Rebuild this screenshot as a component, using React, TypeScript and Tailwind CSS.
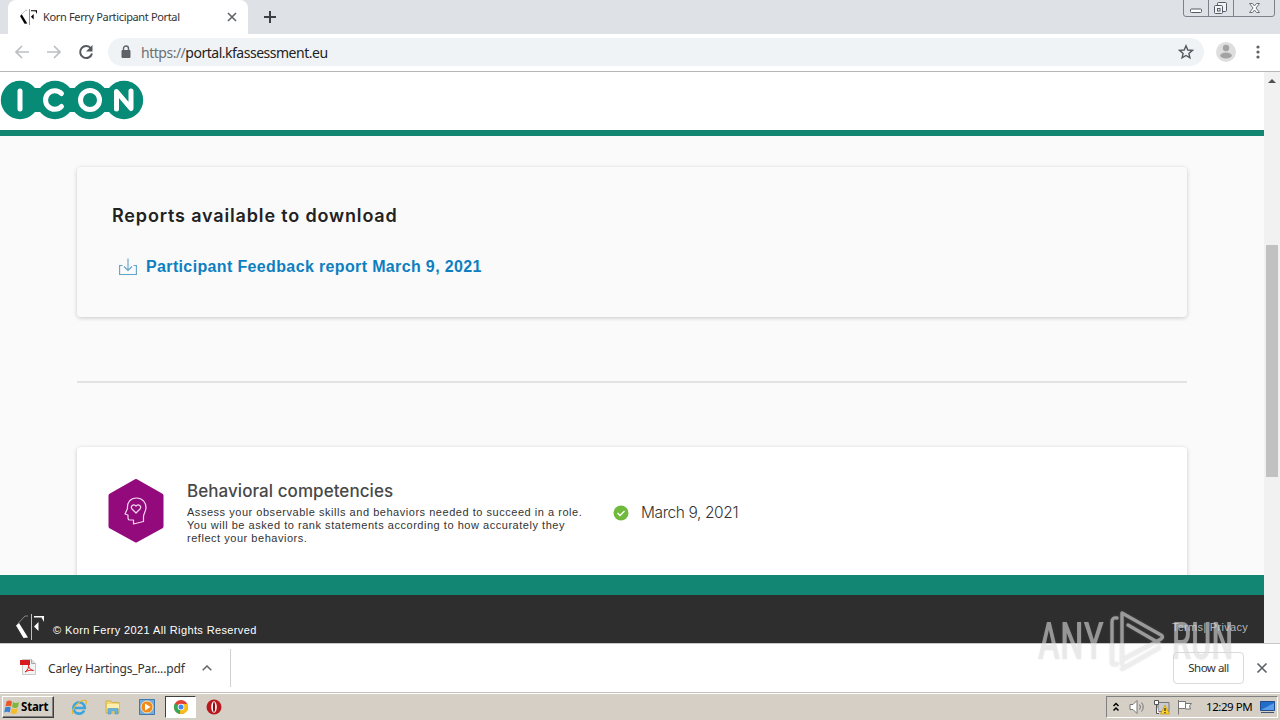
import type { ReactNode } from 'react';

const KfLogo = ({ className }: { className: string }) => (
  <svg viewBox="0 0 28 26" className={className} fill="currentColor">
    <path d="M0 11.500 3 9l9 14.500-4.500.5z" />
    <path d="M2 9.500 9 2h3" stroke="currentColor" strokeWidth="0.7" strokeOpacity="0.6" fill="none" />
    <path d="M15 0h1v26h-1z" fillOpacity="0.7" />
    <path d="M18 2h10v6L25.500 3.500H18zM22.500 8v9L18 12.500z" />
  </svg>
);

const IconLogo = () => (
  <svg viewBox="0 0 144 40" className="h-10 w-36">
    <g fill="#078a76">
      <circle cx="20" cy="20" r="19.200" />
      <circle cx="55" cy="20" r="19.200" />
      <circle cx="89.500" cy="20" r="19.200" />
      <circle cx="124" cy="20" r="19.200" />
      <path d="M33 8h9v24h-9zM68 8h9v24h-9zM102 8h9v24h-9z" />
    </g>
    <g fill="none" stroke="#fff" strokeWidth="5" strokeLinecap="round" strokeLinejoin="round">
      <path d="M20 11v18" />
      <path d="M61.500 13.500a9.300 9.300 0 1 0 0 13" />
      <circle cx="90" cy="20" r="9.500" />
      <path d="M116.500 29V11.500l14.500 17V11" />
    </g>
  </svg>
);

const BrowserTop = () => (
  <div className="shrink-0">
    <div className="flex h-[34px] bg-[#dee1e6] pl-2">
      <div className="flex h-[34px] w-60 items-center rounded-t-lg bg-white pl-3 pr-2.5">
        <KfLogo className="h-4 w-[17px] text-black" />
        <span className="ml-1.5 grow whitespace-nowrap text-[11px] tracking-[-0.35px] text-[#333]">Korn Ferry Participant Portal</span>
        <svg viewBox="0 0 12 12" className="size-3">
          <path d="m2 2 8 8m0-8-8 8" stroke="#5f6368" strokeWidth="1.600" />
        </svg>
      </div>
      <svg viewBox="0 0 14 14" className="ml-[15px] mt-[10px] size-3.5">
        <path d="M7 1v12M1 7h12" stroke="#3c4043" strokeWidth="2" />
      </svg>
      <svg viewBox="0 0 94 18" className="ml-auto mr-1 h-[18px] w-[94px]" fill="none" stroke="#7c828c">
        <path d="M1.500 0v14q0 2.500 2.500 2.500h86q2.500 0 2.500-2.500V0M26.500 0v16M51.500 0v16" />
        <rect x="8.500" y="9" width="11" height="3.500" rx="1" fill="#fff" stroke="#555b66" />
        <g stroke="#555b66" fill="#f2f3f5">
          <rect x="35.500" y="2.500" width="9" height="9" rx="1" />
          <rect x="32.500" y="5.500" width="8" height="8" rx="1" />
          <rect x="35.500" y="8.500" width="2.500" height="2.500" />
        </g>
        <path d="m67.500 3.500h3l2 2.500 2-2.500h3l-3.500 4.500 3.500 4.500h-3l-2-2.500-2 2.500h-3L71 8z" fill="#fff" stroke="#6d727c" />
      </svg>
    </div>
    <div className="flex h-[38px] items-center border-b border-[#b6b6b6] bg-white pb-px pl-[14px] pr-5">
      <svg viewBox="0 0 16 16" className="size-4" fill="none" stroke="#bcbec1" strokeWidth="1.700">
        <path d="M15 8H2m6-6L2 8l6 6" />
      </svg>
      <svg viewBox="0 0 16 16" className="ml-4 size-4" fill="none" stroke="#bcbec1" strokeWidth="1.700">
        <path d="M1 8h13M8 2l6 6-6 6" />
      </svg>
      <svg viewBox="0 0 16 16" className="ml-4 size-4">
        <path d="M13 4.500A6 6 0 1 0 14 9.500" fill="none" stroke="#55585c" strokeWidth="2" />
        <path d="M14.500 1v6.500H8z" fill="#55585c" />
      </svg>
      <div className="ml-[14px] flex h-7 grow items-center rounded-full bg-[#f0f3f6] pl-3 pr-2.5">
        <svg viewBox="0 0 12 14" className="h-[14px] w-3">
          <path d="M2 5.500h8V12.500H2z" fill="#5f6368" stroke="#5f6368" strokeLinejoin="round" />
          <path d="M3.500 6V3.500a2.500 2.500 0 0 1 5 0V6" fill="none" stroke="#5f6368" strokeWidth="1.400" />
        </svg>
        <span className="ml-[9px] text-[14px] tracking-[-0.49px] text-[#222]">
          <span className="text-[#6b6f73]">https://</span>portal.kfassessment.eu
        </span>
        <svg viewBox="0 0 16 16" className="ml-auto size-4" fill="none" stroke="#55585c" strokeWidth="1.400">
          <path d="m8 1.800 1.800 4.200 4.600.4-3.500 3 1 4.500L8 11.500l-3.900 2.400 1-4.500-3.500-3 4.600-.4z" />
        </svg>
      </div>
      <svg viewBox="0 0 20 20" className="ml-3 size-5">
        <circle cx="10" cy="10" r="10" fill="#dedede" />
        <circle cx="10" cy="6" r="3.200" fill="#a3a3a3" />
        <ellipse cx="10" cy="13.500" rx="5.800" ry="3" fill="#a3a3a3" />
      </svg>
      <svg viewBox="0 0 4 14" className="ml-5 h-3.5 w-1" fill="#5f6368">
        <circle cx="2" cy="2" r="1.600" />
        <circle cx="2" cy="7" r="1.600" />
        <circle cx="2" cy="12" r="1.600" />
      </svg>
    </div>
  </div>
);

const ReportsCard = () => (
  <section className="h-[150px] shrink-0 rounded-sm bg-[#fafafa] pl-[35px] pt-9 shadow-[0_1px_4px_rgba(0,0,0,0.2)]">
    <h2 className="whitespace-nowrap font-['Inter'] text-[18px] font-semibold leading-[26px] tracking-[0.84px] text-[#222]">Reports available to download</h2>
    <a className="mt-[25px] flex items-center pl-[7px] text-[#0d7fc0]">
      <svg viewBox="0 0 18 18" className="size-[18px]" fill="none" stroke="#5fa3cb" strokeWidth="1.100">
        <path d="M3.500 7.500H.6v9h16.800v-9h-2.900M9 .5v12M5 8.500l4 4 4-4" />
      </svg>
      <span className="ml-[9px] whitespace-nowrap font-['Liberation_Sans'] text-[16px] font-bold leading-[26px] tracking-[0.36px]">Participant Feedback report March 9, 2021</span>
    </a>
  </section>
);

const CompetencyCard = () => (
  <section className="flex h-40 shrink-0 rounded-sm bg-white pl-[31px] pt-8 shadow-[0_1px_4px_rgba(0,0,0,0.2)]">
    <svg viewBox="0 0 56 64" className="h-16 w-14 shrink-0">
      <path d="M28 2 53.500 16.500v31L28 61.500 2.500 47.500v-31z" fill="#920a7c" stroke="#920a7c" strokeWidth="4" strokeLinejoin="round" />
      <g fill="none" stroke="#f3d9ef" strokeWidth="1.200" strokeLinejoin="round" strokeLinecap="round">
        <path d="M25.500 45v-4h-4q-1.500 0-1.500-2v-3l-3-1 2.500-5.500C19 23 22.500 19 28.500 19c6 0 9.500 4.500 9.500 9.500 0 4-2.500 6-2.500 9v5z" />
        <path d="m28 34-4-4c-2-2.500 1.500-6 4-2.800 2.500-3.200 6 .3 4 2.800z" />
      </g>
    </svg>
    <div className="ml-[23px] w-[426px] whitespace-nowrap">
      <h3 className="pt-px font-['Inter'] text-[17px] font-medium leading-[22px] tracking-[0.06px] text-[#484848]">Behavioral competencies</h3>
      <p className="mt-1 font-['Liberation_Sans'] text-[11px] leading-[13px] tracking-[0.53px] text-[#333]">
        Assess your observable skills and behaviors needed to succeed in a role.
        <br />
        You will be asked to rank statements according to how accurately they
        <br />
        reflect your behaviors.
      </p>
    </div>
    <div className="flex h-[67px] items-center">
      <svg viewBox="0 0 16 16" className="size-4">
        <circle cx="8" cy="8" r="7.500" fill="#6fba3c" />
        <path d="m4.500 8 2.500 2.500 4.500-4.500" fill="none" stroke="#fff" strokeWidth="1.300" />
      </svg>
      <span className="ml-3 whitespace-nowrap font-['Inter'] text-[15.500px] font-light tracking-[-0.4px] text-[#333]">March 9, 2021</span>
    </div>
  </section>
);

const Footer = () => (
  <footer className="shrink-0">
    <div className="h-5 bg-[#138573]" />
    <div className="flex h-12 justify-between bg-[#2e2e2e] px-4 pt-[19px] font-['Liberation_Sans'] text-[11px] text-white">
      <div className="flex">
        <KfLogo className="h-[26px] w-7" />
        <span className="ml-[9px] pt-2 tracking-[0.38px]">© Korn Ferry 2021 All Rights Reserved</span>
      </div>
      <span className="pt-[5px] tracking-[0.3px] text-[#b5b5b5]">Terms| Privacy</span>
    </div>
  </footer>
);

const Scrollbar = () => (
  <div className="flex w-4 shrink-0 flex-col items-center bg-[#f1f1f1]">
    <svg viewBox="0 0 8 4" className="mt-[7px] h-1 w-2">
      <path d="m0 4 4-4 4 4z" fill="#505050" />
    </svg>
    <div className="mt-[162px] h-[232px] w-3 bg-[#c1c1c1]" />
  </div>
);

const DownloadBar = () => (
  <div className="flex h-[50px] shrink-0 items-center border-t border-[#c8c8c8] bg-white pb-0.5 pl-5 pr-3">
    <svg viewBox="0 0 17 18" className="mb-0.5 h-[18px] w-[17px]">
      <path d="M2.500 1.500h9l4 4v11h-13z" fill="#f3f3f3" stroke="#c9c9c9" />
      <path d="M11.500 1.500v4h4" fill="#ddd" stroke="#aaa" />
      <path d="M0 2h10v5H0z" fill="#d71920" />
      <path d="M5 14c3-2 4-5 3.500-7.500M8.500 8c1 3 3 4.500 5 4.500-3-.8-6 0-8.500 1.500" fill="none" stroke="#d22" />
    </svg>
    <span className="ml-[11px] whitespace-nowrap pt-[3px] text-[12px] tracking-[-0.16px] text-[#333]">Carley Hartings_Par....pdf</span>
    <svg viewBox="0 0 10 6" className="ml-[17px] h-1.5 w-2.5">
      <path d="m.7 5.300 4.300-4.300 4.300 4.300" fill="none" stroke="#666" strokeWidth="1.500" />
    </svg>
    <div className="ml-[18px] h-[38px] w-px bg-[#cfcfcf]" />
    <button className="ml-auto h-8 w-[71px] rounded border border-[#d8dadd] text-[11.500px] tracking-[-0.5px] text-[#333]">Show all</button>
    <svg viewBox="0 0 12 12" className="ml-3 size-3">
      <path d="m1.500 1.500 9 9m0-9-9 9" stroke="#5f6368" strokeWidth="1.700" />
    </svg>
  </div>
);

const TaskIcon = ({ children }: { children: ReactNode }) => (
  <svg viewBox="0 0 16 16" className="size-4 shrink-0">{children}</svg>
);

const Taskbar = () => (
  <div className="flex h-[27px] shrink-0 items-center border-t border-[#fff] bg-[#d5cfc6] pl-0.5 pr-0.5 shadow-[0_-1px_0_#c5c1ba]">
    <div className="flex h-[22px] w-[52px] items-center border border-b-[#404040] border-l-white border-r-[#404040] border-t-white pl-px shadow-[inset_-1px_-1px_0_#808080]">
      <svg viewBox="0 0 16 16" className="size-4">
        <path d="M2.500 2.500q3-2 5.500 0L7 7.500q-2.500-1.500-5.500 0z" fill="#e8582b" />
        <path d="M9 3q3 2 6 0l-1 5q-3 2-6 0z" fill="#7db83a" />
        <path d="M1.200 8.500q3-1.500 5.500 0l-1 5q-2.500-1.500-5.500 0z" fill="#3b82d0" />
        <path d="M7.700 9q3 2 6 0l-1 5q-3 2-6 0z" fill="#f5bd28" />
      </svg>
      <span className="ml-px text-[11.500px] font-bold tracking-[-0.2px] text-black">Start</span>
    </div>
    <div className="ml-[17px] flex items-center">
      <TaskIcon>
        <path d="M13.200 11.500A5.700 5.700 0 1 1 13.800 9H4" fill="none" stroke="#3aa5df" strokeWidth="2.600" />
        <path d="M2 15C-1 13 7 1 14 1c2 .5 1.500 3 .5 4.500" fill="none" stroke="#e5b82e" strokeWidth="1.200" />
      </TaskIcon>
      <div className="ml-[18px] flex">
        <TaskIcon>
          <path d="M1 2h5l1 1.500h7V14H1z" fill="#f2d675" stroke="#d1b04d" />
          <path d="M2 5h12v5H2z" fill="#fbefae" />
          <path d="M3 15V9.500h10V15h-3v-3H6v3z" fill="#68b2dc" stroke="#4d94c4" strokeWidth="0.6" />
        </TaskIcon>
      </div>
      <div className="ml-[18px] flex">
        <TaskIcon>
          <path d="M.5.5h15v15H.5z" fill="#78add8" stroke="#3e79ae" />
          <circle cx="8" cy="8" r="6" fill="#f18a1c" stroke="#fff2d2" strokeWidth="0.8" />
          <path d="m6 4.500 5.500 3.500L6 11.500z" fill="#fff" />
        </TaskIcon>
      </div>
      <div className="ml-[10px] flex h-[22px] w-[31px] items-center justify-center border border-b-white border-l-[#404040] border-r-white border-t-[#404040] bg-white">
        <TaskIcon>
          <circle cx="8" cy="8" r="7" fill="#e24135" />
          <path d="M8 8 1.900 4.500A7 7 0 0 0 7 15z" fill="#35a853" />
          <path d="M8 8h-.5L7 15A7 7 0 0 0 14.200 5H8z" fill="#fbbf17" />
          <circle cx="8" cy="8" r="3.300" fill="#fff" />
          <circle cx="8" cy="8" r="2.500" fill="#4285f4" />
        </TaskIcon>
      </div>
      <div className="ml-[10px] flex">
        <TaskIcon>
          <circle cx="8" cy="8" r="7.500" fill="#b8191e" />
          <ellipse cx="8" cy="8" rx="2.800" ry="5.800" fill="#fff" />
          <ellipse cx="8" cy="8" rx="1.100" ry="5" fill="#900a10" />
        </TaskIcon>
      </div>
    </div>
    <div className="ml-auto flex h-[22px] w-[172px] items-center border border-b-white border-l-[#808080] border-r-white border-t-[#808080] pl-[5px]">
      <svg viewBox="0 0 8 10" className="h-2.5 w-2 shrink-0" fill="none" stroke="#000" strokeWidth="1.500">
        <path d="m1.500 4 2.500-2.500 2.500 2.500M1.500 8.500l2.500-2.500 2.500 2.500" />
      </svg>
      <svg viewBox="0 0 17 16" className="ml-[9px] h-4 w-[17px] shrink-0" fill="none" stroke="#777">
        <path d="M1 5.500h3l4-4v13l-4-4H1z" fill="#fff" />
        <path d="M10.500 5.500q2 2.500 0 5M12.500 3.500q3.500 4.500 0 9" />
      </svg>
      <svg viewBox="0 0 17 16" className="ml-[7px] h-4 w-[17px] shrink-0">
        <path d="M5 3.500h11v9H5z" fill="#c8ccd0" stroke="#777" />
        <path d="M1.500 1.500h4v4h-4zM3.500 5.500v9H6" fill="#fff" stroke="#555" />
        <path d="m12 6 4.500 9h-9z" fill="#ffd22b" stroke="#c6940a" strokeWidth="0.7" />
        <path d="M12 9v3m0 1v1.200" stroke="#222" strokeWidth="1.200" />
      </svg>
      <svg viewBox="0 0 16 16" className="ml-[7px] size-4 shrink-0" fill="#fff" stroke="#777">
        <path d="M1.500 1v14.500M2 2.500h6.500v7H2M8.500 4.500h6l-2 2.500 1 3h-5" />
      </svg>
      <span className="ml-[13px] whitespace-nowrap text-[11.500px] tracking-[-0.45px] text-black">12:29 PM</span>
      <svg viewBox="0 0 15 14" className="ml-auto mr-0.5 h-3.5 w-[15px] shrink-0">
        <path d="M.5 1.500h14v9H.5z" fill="#226dca" stroke="#1e4d91" />
        <path d="M1 10 14 3v7z" fill="#5d9ce8" />
        <path d="M1 12.500h13" stroke="#405572" />
      </svg>
    </div>
  </div>
);

const Watermark = () => (
  <div className="pointer-events-none absolute left-[1038px] top-[608px] flex h-16 w-52 items-center text-[#dcdcdc] opacity-60 [text-shadow:0_0_2px_#8886]">
    <span className="w-[64px] origin-left scale-x-[0.63] pt-1 font-['Roboto'] text-[52px] font-medium leading-none tracking-[1px]">ANY</span>
    <svg viewBox="0 0 58 64" className="ml-1.5 h-16 w-[58px] shrink-0 drop-shadow-[0_0_1px_#8888]" fill="none" stroke="#e2e2e2" strokeWidth="3.400" strokeLinejoin="round" strokeLinecap="round">
      <path d="M9 10q-5-1-5 4v40q0 4 5 2" />
      <path d="M14 56V5L53 27q3 2 0 4L14 52" />
      <path d="m20 17 31 18" />
      <path d="m14 61 37-21" />
    </svg>
    <span className="ml-[6px] w-[62px] origin-left scale-x-[0.59] pt-1 font-['Roboto'] text-[52px] font-medium leading-none">RUN</span>
  </div>
);

export default function App() {
  return (
    <div className="relative flex h-[720px] w-[1280px] flex-col overflow-hidden bg-white font-['Noto_Sans',sans-serif]">
      <BrowserTop />
      <div className="flex min-h-0 grow">
        <main className="flex min-w-0 grow flex-col">
          <header className="h-16 shrink-0 border-b-[6px] border-[#138573] bg-white pt-2">
            <IconLogo />
          </header>
          <div className="flex min-h-0 grow flex-col overflow-hidden bg-[#fafafa] px-[77px] pt-[31px]">
            <ReportsCard />
            <hr className="my-16 shrink-0 border-t-2 border-[#e2e2e2]" />
            <CompetencyCard />
          </div>
          <Footer />
        </main>
        <Scrollbar />
      </div>
      <DownloadBar />
      <Taskbar />
      <Watermark />
    </div>
  );
}
